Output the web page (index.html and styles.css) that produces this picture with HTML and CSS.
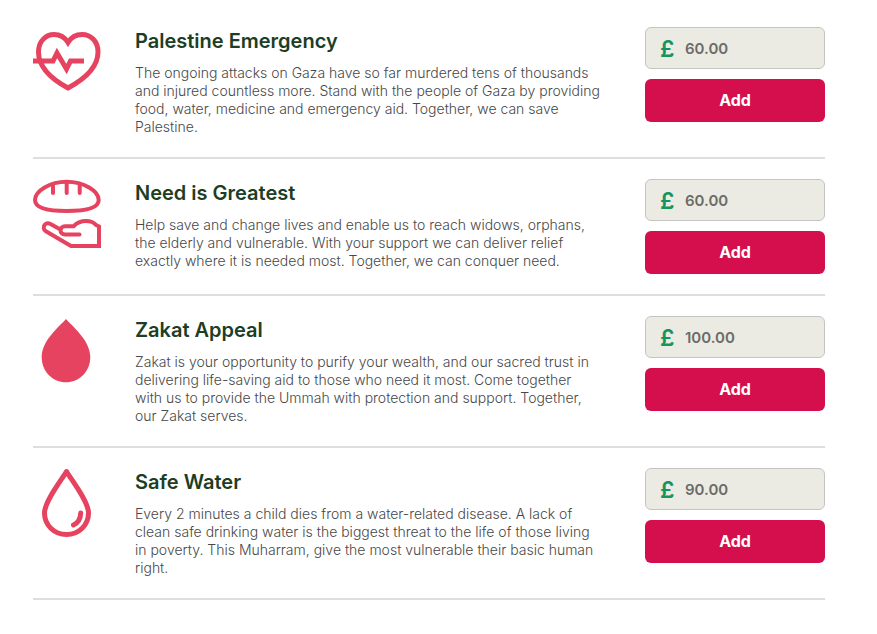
FILE: index.html
```html
<!DOCTYPE html>
<html lang="en">

<head>
    <meta charset="UTF-8">
    <meta name="viewport" content="width=device-width, initial-scale=1.0">
    <title>Appeals</title>
    <link rel="stylesheet" href="styles.css">
</head>

<body>
    <main class="appeals">
        <section class="appeal">
            <svg class="icon" viewBox="0 0 68 70" aria-hidden="true">
                <path stroke-width="5" d="M35 61C22 54 5.500 42 5.500 25C5.500 14 13 7.500 21 7.500C27 7.500 32 10.500 35 15.500C38 10.500 43 7.500 49 7.500C58 7.500 65 14.500 65 25C65 42 48 54 35 61Z" />
                <path stroke-width="5" d="M0 34H20L24 26L33.500 42L37.500 34H51" />
            </svg>
            <div class="info">
                <h2>Palestine Emergency</h2>
                <p>The ongoing attacks on Gaza have so far murdered tens of thousands<br>
                    and injured countless more. Stand with the people of Gaza by providing<br>
                    food, water, medicine and emergency aid. Together, we can save<br>
                    Palestine.</p>
            </div>
            <form class="donate">
                <div class="amount">
                    <label for="palestine">£</label>
                    <input type="text" id="palestine" name="palestine" value="60.00">
                </div>
                <button type="button">Add</button>
            </form>
        </section>

        <section class="appeal">
            <svg class="icon" viewBox="0 0 68 70" aria-hidden="true">
                <path d="M2 21C2 12 17 2.700 33.500 2.700C51 2.700 65.700 12 65.700 21C65.700 29 52 32 33.500 32C15 32 2 29 2 21Z" />
                <path stroke-linecap="round" d="M20 5V14M33.700 3V14M46.700 5V14" />
                <path stroke-linecap="round" d="M46.500 55.500H32C26 55.500 26 47.300 32 47.300H40.500C44 43.500 48 42 53 42C58 42 61 43.500 63 46L66 47.500V67H38L12.500 52A4.300 4.300 0 0 1 17 44.700L27.500 50.500" />
            </svg>
            <div class="info">
                <h2>Need is Greatest</h2>
                <p>Help save and change lives and enable us to reach widows, orphans,<br>
                    the elderly and vulnerable. With your support we can deliver relief<br>
                    exactly where it is needed most. Together, we can conquer need.</p>
            </div>
            <form class="donate">
                <div class="amount">
                    <label for="need">£</label>
                    <input type="text" id="need" name="need" value="60.00">
                </div>
                <button type="button">Add</button>
            </form>
        </section>

        <section class="appeal">
            <svg class="icon filled" viewBox="0 0 68 70" aria-hidden="true">
                <path d="M33 3C38 9 57.300 24 57.300 41C57.300 56 46 66.300 33 66.300C20 66.300 8.700 56 8.700 41C8.700 24 28 9 33 3Z" />
            </svg>
            <div class="info">
                <h2>Zakat Appeal</h2>
                <p>Zakat is your opportunity to purify your wealth, and our sacred trust in<br>
                    delivering life-saving aid to those who need it most. Come together<br>
                    with us to provide the Ummah with protection and support. Together,<br>
                    our Zakat serves.</p>
            </div>
            <form class="donate">
                <div class="amount">
                    <label for="zakat">£</label>
                    <input type="text" id="zakat" name="zakat" value="100.00">
                </div>
                <button type="button">Add</button>
            </form>
        </section>

        <section class="appeal">
            <svg class="icon" viewBox="0 0 68 70" aria-hidden="true">
                <path stroke-width="5" stroke-linejoin="round" d="M33.500 3.500C30 10 11.500 33 11.500 45C11.500 57 21 66.500 33.500 66.500C46 66.500 55.500 57 55.500 45C55.500 33 37 10 33.500 3.500Z" />
                <path stroke-width="5" stroke-linecap="round" d="M47.700 45C47.500 51 45 55 40.500 57" />
            </svg>
            <div class="info">
                <h2>Safe Water</h2>
                <p>Every 2 minutes a child dies from a water-related disease. A lack of<br>
                    clean safe drinking water is the biggest threat to the life of those living<br>
                    in poverty. This Muharram, give the most vulnerable their basic human<br>
                    right.</p>
            </div>
            <form class="donate">
                <div class="amount">
                    <label for="water">£</label>
                    <input type="text" id="water" name="water" value="90.00">
                </div>
                <button type="button">Add</button>
            </form>
        </section>
    </main>
</body>

</html>
```

FILE: styles.css
```css
* {
    box-sizing: border-box;
}

body {
    margin: 0;
    padding: 7px 52px 0 33px;
    background: #fff;
    font-family: Inter, "Open Sans", sans-serif;
}

.appeal {
    display: grid;
    grid-template-columns: 68px 1fr 180px;
    column-gap: 34px;
    align-items: start;
    padding: 20px 0;
    border-bottom: 2px solid #dedede;
}

.icon {
    width: 68px;
    height: 70px;
    fill: none;
    stroke: #e54360;
    stroke-width: 4;
}

.icon.filled {
    fill: #e54360;
    stroke: none;
}

.info h2 {
    margin: 0 0 9px;
    color: #1d3d24;
    font-size: 20px;
    font-weight: 600;
    line-height: 28px;
}

.info p {
    margin: 0 0 1px;
    color: #484848;
    font-size: 14px;
    font-weight: 300;
    line-height: 18px;
}

.donate {
    display: flex;
    flex-direction: column;
    gap: 10px;
}

.amount {
    display: flex;
    align-items: center;
    height: 42px;
    padding: 0 14px;
    border: 1px solid #c4c5c2;
    border-radius: 6px;
    background: #ebebe3;
}

.amount label {
    width: 25px;
    padding-top: 2px;
    color: #149460;
    font-size: 23px;
    font-weight: 600;
}

.amount input {
    flex: 1;
    min-width: 0;
    padding: 0;
    border: 0;
    outline: 0;
    background: transparent;
    color: #6b6b68;
    font-family: inherit;
    font-size: 15px;
    font-weight: 600;
}

.donate button {
    height: 43px;
    padding: 0 0 2px;
    border: 0;
    border-radius: 6px;
    background: #d50f4e;
    color: #fff;
    font-family: inherit;
    font-size: 16px;
    font-weight: 700;
    cursor: pointer;
}

@media (max-width: 600px) {
    .appeal {
        grid-template-columns: 68px 1fr;
        row-gap: 16px;
    }

    .donate {
        grid-column: 1 / -1;
    }

    .info br {
        display: none;
    }
}
```
